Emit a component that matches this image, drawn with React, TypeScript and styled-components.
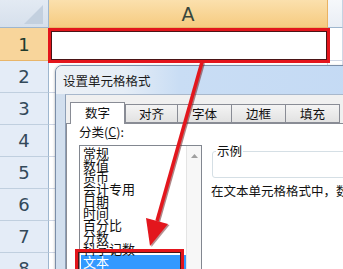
import React from 'react';
import styled, { createGlobalStyle } from 'styled-components';

const GlobalStyle = createGlobalStyle`
  * { box-sizing: border-box; }
  html, body { margin: 0; padding: 0; background: #fff; }
  body { font-family: "Noto Sans CJK SC", "Liberation Sans", sans-serif; }
`;

const Screen = styled.div`
  position: relative;
  width: 343px;
  height: 269px;
  overflow: hidden;
  background: #fff;
`;

const Sheet = styled.div`
  display: grid;
  grid-template-columns: 49px 279px 1fr;
  grid-template-rows: 28px 33px repeat(7, 32px);
`;

const Corner = styled.div`
  display: flex;
  align-items: flex-end;
  justify-content: flex-end;
  padding: 0 5px 3px 0;
  background: linear-gradient(#e3eaf3, #d6e0ec);
  border-right: 1px solid #9eb6ce;
  border-bottom: 1px solid #9eb6ce;
`;

const ColHeader = styled.div<{ $active?: boolean }>`
  display: flex;
  align-items: center;
  justify-content: center;
  font-family: "DejaVu Sans", sans-serif;
  font-size: 19px;
  color: #37463c;
  background: ${p => (p.$active ? 'linear-gradient(#fbe0ad, #f6cb80)' : 'linear-gradient(#f6f8fb, #e9eef5)')};
  border-right: 1px solid ${p => (p.$active ? '#eab262' : '#c5d2e2')};
  border-bottom: 1px solid ${p => (p.$active ? '#e8b56a' : '#9eb6ce')};
`;

const RowHeader = styled.div<{ $active?: boolean }>`
  display: flex;
  align-items: center;
  justify-content: center;
  font-family: "DejaVu Sans", sans-serif;
  font-size: 18px;
  color: ${p => (p.$active ? '#203a2c' : '#33495a')};
  background: ${p => (p.$active ? '#f8d59b' : '#e4ecf7')};
  border-right: 1px solid ${p => (p.$active ? '#e8b56a' : '#9eb6ce')};
  border-bottom: 1px solid ${p => (p.$active ? '#e8b56a' : '#c0cfdf')};
`;

const Cell = styled.div`
  background: #fff;
  border-right: 1px solid #d0d7e5;
  border-bottom: 1px solid #d0d7e5;
`;

const Highlight = styled.div<{ $left: number; $top: number; $w: number; $h: number }>`
  position: absolute;
  left: ${p => p.$left}px;
  top: ${p => p.$top}px;
  width: ${p => p.$w}px;
  height: ${p => p.$h}px;
  border: 3px solid #e3151c;
  box-shadow: inset 0 0 0 1px #4a1416;
  z-index: 5;
`;

const Dialog = styled.div`
  position: absolute;
  left: 55px;
  top: 65px;
  width: 310px;
  height: 230px;
  display: flex;
  flex-direction: column;
  border: 1px solid #7b8ea8;
  border-top-left-radius: 7px;
  background: #d2dfee;
  box-shadow: -1px 0 2px rgba(0, 0, 0, 0.15);
  z-index: 2;
`;

const TitleBar = styled.div`
  flex-shrink: 0;
  height: 28px;
  padding-left: 7px;
  display: flex;
  align-items: center;
  font-size: 12.5px;
  color: #1b1b1b;
  border-top-left-radius: 6px;
  background: linear-gradient(90deg, #edf1f6 0%, #e5edf6 22%, #c9ddf4 40%, #c4daf4 100%);
`;

const Client = styled.div`
  flex: 1;
  min-height: 0;
  margin-left: 9px;
  display: flex;
  flex-direction: column;
  padding-top: 7px;
  background: #f0f0f0;
  border-top: 1px solid #a8b8cc;
  border-left: 1px solid #8d9fb6;
`;

const TabStrip = styled.div`
  flex-shrink: 0;
  display: flex;
  align-items: flex-end;
  height: 21px;
  padding-left: 4px;
  position: relative;
  z-index: 1;
`;

const Tab = styled.div<{ $active?: boolean; $w: number }>`
  width: ${p => p.$w}px;
  height: ${p => (p.$active ? 22 : 19)}px;
  margin-bottom: ${p => (p.$active ? -1 : 0)}px;
  margin-right: ${p => (p.$active ? 0 : -1)}px;
  display: flex;
  align-items: center;
  justify-content: center;
  padding-bottom: ${p => (p.$active ? 2 : 0)}px;
  font-size: 12.5px;
  color: #111;
  background: ${p => (p.$active ? '#fff' : 'linear-gradient(#f4f4f4, #e2e2e2)')};
  border: 1px solid #898c95;
  border-bottom: ${p => (p.$active ? 'none' : '1px solid #898c95')};
`;

const TabPage = styled.div`
  flex: 1;
  min-height: 0;
  display: flex;
  gap: 9px;
  padding-left: 12px;
  background: #fff;
  border: 1px solid #898c95;
  border-right: none;
`;

const LeftColumn = styled.div`
  flex-shrink: 0;
  width: 123px;
  display: flex;
  flex-direction: column;
`;

const FieldLabel = styled.div`
  flex-shrink: 0;
  height: 16px;
  line-height: 16px;
  margin-bottom: 5px;
  font-size: 12.5px;
  color: #111;
  white-space: nowrap;
`;

const ListBox = styled.div`
  flex: 1;
  min-height: 0;
  display: flex;
  overflow: hidden;
  border: 1px solid #828790;
  background: #fff;
`;

const Items = styled.div`
  flex: 1;
  padding-top: 1px;
  padding-left: 1px;
`;

const Item = styled.div<{ $selected?: boolean }>`
  height: ${p => (p.$selected ? 15 : 12)}px;
  line-height: ${p => (p.$selected ? 13 : 12)}px;
  padding-left: 2px;
  font-size: 13px;
  white-space: nowrap;
  color: ${p => (p.$selected ? '#fff' : '#111')};
  background: ${p => (p.$selected ? '#3399ff' : 'transparent')};
`;

const ScrollBar = styled.div`
  width: 15px;
  flex-shrink: 0;
  display: flex;
  justify-content: center;
  padding-top: 8px;
  background: #f7f7f7;
  border-left: 1px solid #e4e4e4;
`;

const RightColumn = styled.div`
  flex: 1;
  min-width: 0;
  padding-top: 20px;
  display: flex;
  flex-direction: column;
`;

const GroupBox = styled.fieldset`
  flex-shrink: 0;
  margin: 0 0 0 1px;
  padding: 0 0 0 3px;
  height: 34px;
  border: 1px solid #d5dfe5;
  border-radius: 3px;
  min-width: 0;
`;

const Legend = styled.legend`
  padding: 0 1px;
  font-size: 12.5px;
  line-height: 14px;
  color: #111;
`;

const Description = styled.div`
  margin-top: 6px;
  line-height: 14px;
  font-size: 12.5px;
  color: #111;
  white-space: nowrap;
`;

const Overlay = styled.svg`
  position: absolute;
  left: 0;
  top: 0;
  pointer-events: none;
  z-index: 6;
`;

const rows = [2, 3, 4, 5, 6, 7, 8];
const tabs = [
  { label: '数字', w: 55 },
  { label: '对齐', w: 53 },
  { label: '字体', w: 55 },
  { label: '边框', w: 55 },
  { label: '填充', w: 55 },
];
const categories = ['常规', '数值', '货币', '会计专用', '日期', '时间', '百分比', '分数', '科学记数', '文本', '特殊', '自定义'];

const App: React.FC = () => {
  return (
    <Screen>
      <GlobalStyle />
      <Sheet>
        <Corner>
          <svg width="19" height="19" viewBox="0 0 19 19">
            <polygon points="19,0 19,19 0,19" fill="#c3d0df" />
          </svg>
        </Corner>
        <ColHeader $active>A</ColHeader>
        <ColHeader />
        <RowHeader $active>1</RowHeader>
        <Cell />
        <Cell />
        {rows.map(r => (
          <React.Fragment key={r}>
            <RowHeader>{r}</RowHeader>
            <Cell />
            <Cell />
          </React.Fragment>
        ))}
      </Sheet>

      <Dialog>
        <TitleBar>设置单元格格式</TitleBar>
        <Client>
          <TabStrip>
            {tabs.map((t, i) => (
              <Tab key={t.label} $w={t.w} $active={i === 0}>
                {t.label}
              </Tab>
            ))}
          </TabStrip>
          <TabPage>
            <LeftColumn>
              <FieldLabel>分类(<u>C</u>):</FieldLabel>
              <ListBox>
                <Items>
                  {categories.map(c => (
                    <Item key={c} $selected={c === '文本'}>
                      {c}
                    </Item>
                  ))}
                </Items>
                <ScrollBar>
                  <svg width="7" height="4" viewBox="0 0 7 4">
                    <polygon points="3.5,0 7,4 0,4" fill="#a0a0a0" />
                  </svg>
                </ScrollBar>
              </ListBox>
            </LeftColumn>
            <RightColumn>
              <GroupBox>
                <Legend>示例</Legend>
              </GroupBox>
              <Description>在文本单元格格式中，数字作为文本处理。单元格显示的内容与输入的内容完全一致。</Description>
            </RightColumn>
          </TabPage>
        </Client>
      </Dialog>

      <Highlight $left={48} $top={28} $w={282} $h={35} />
      <Highlight $left={75} $top={249} $w={109} $h={30} />

      <Overlay width="343" height="269" viewBox="0 0 343 269">
        <line x1="203.5" y1="63" x2="158.5" y2="222" stroke="#6d2224" strokeOpacity="0.55" strokeWidth="3" />
        <line x1="202" y1="62" x2="157" y2="221" stroke="#e3161d" strokeWidth="3.5" />
        <polygon points="151.5,247 147.5,219 169.5,225" fill="#6d2224" fillOpacity="0.5" />
        <polygon points="150,246 146,218 168,224" fill="#e3161d" />
      </Overlay>
    </Screen>
  );
};

export default App;
